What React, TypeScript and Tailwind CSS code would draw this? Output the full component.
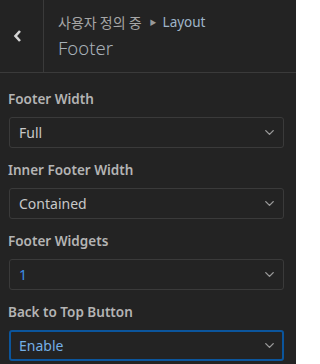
import { ChevronDown } from 'lucide-react'

const FIELDS: { label: string; value: string; tone?: 'blue' | 'focus' }[] = [
    { label: 'Footer Width', value: 'Full' },
    { label: 'Inner Footer Width', value: 'Contained' },
    { label: 'Footer Widgets', value: '1', tone: 'blue' },
    { label: 'Back to Top Button', value: 'Enable', tone: 'focus' },
]

function Select({ value, tone }: { value: string; tone?: 'blue' | 'focus' }) {
    const box = tone === 'focus'
        ? 'border-2 border-[#0b559c] pl-[8px] pr-[5px]'
        : 'border border-[#3a3a3a] pl-[9px] pr-[6px]'
    const text = tone === 'focus' ? 'text-[#74afe6]' : tone === 'blue' ? 'text-[#3d8fe8]' : 'text-[#c8c8c8]'
    return (
        <div className={`ml-px flex h-[31px] items-center justify-between rounded-[3px] ${box}`}>
            <span className={`text-[14px] ${text}`}>{value}</span>
            <ChevronDown size={15} strokeWidth={2.2} className="text-[#9a9a9a]" />
        </div>
    )
}

export default function App() {
    return (
        <div
            className="h-[364px] w-[296px] overflow-hidden bg-[#232323]"
            style={{ fontFamily: '"Noto Sans", "Noto Sans CJK KR", sans-serif' }}
        >
            <div className="flex h-[73px] border-b border-[#3a3a3a]">
                <div className="flex w-[44px] items-center justify-center border-r border-[#3a3a3a] pr-[7px]">
                    <svg width="10" height="14" viewBox="0 0 10 14">
                        <polyline points="7,2 2.5,7 7,12" fill="none" stroke="#d4d4d4" strokeWidth="2.6" />
                    </svg>
                </div>
                <div className="flex flex-col pl-[14px] pt-[13px]">
                    <div className="flex items-center text-[14px] leading-[19px] text-[#a6a6a6]">
                        <span style={{ fontFamily: '"Noto Sans CJK KR", sans-serif' }}>사용자 정의 중</span>
                        <span className="ml-[8px] mr-[6px] text-[7px] text-[#9a9a9a]">▶</span>
                        <span className="text-[13.5px] text-[#9fb5c9]">Layout</span>
                    </div>
                    <div className="mt-[4px] text-[18.5px] font-light leading-[24px] text-[#a8b0b8]">Footer</div>
                </div>
            </div>
            <div className="flex flex-col gap-[13px] pl-2 pr-3 pt-[17px]">
                {FIELDS.map(f => (
                    <div key={f.label}>
                        <div className="mb-[9px] text-[13.5px] font-semibold leading-[18px] text-[#b4b4b4]">{f.label}</div>
                        <Select value={f.value} tone={f.tone} />
                    </div>
                ))}
            </div>
        </div>
    )
}
